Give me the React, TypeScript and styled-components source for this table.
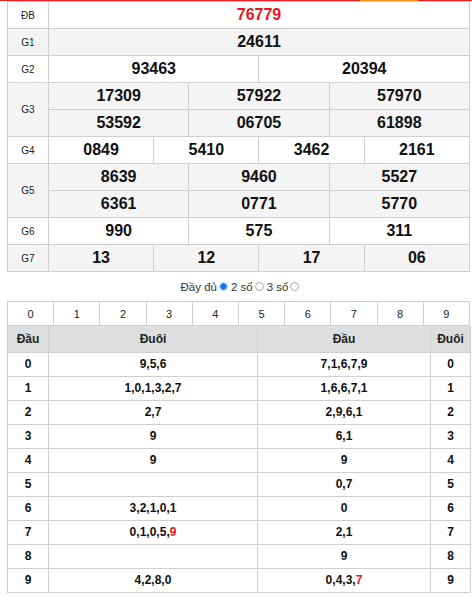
import React from 'react';
import styled, { createGlobalStyle } from 'styled-components';

const GlobalStyle = createGlobalStyle`
  html, body { margin: 0; padding: 0; background: #fff; }
  body { font-family: "Liberation Sans", Arial, sans-serif; color: #222; }
`;

const Page = styled.div`
  width: 472px;
`;

const TopBar = styled.div`
  height: 1px;
  display: flex;
`;

const BarSeg = styled.div<{ $w: number; $c: string }>`
  width: ${(p) => p.$w}px;
  background: ${(p) => p.$c};
  flex: ${(p) => (p.$w ? '0 0 auto' : '1 1 auto')};
`;

const Content = styled.div`
  padding-left: 7px;
  width: 463px;
`;

const ResultTable = styled.table`
  width: 463px;
  table-layout: fixed;
  border-collapse: collapse;
`;

const PrizeRow = styled.tr<{ $alt?: boolean }>`
  height: 27px;
  background: ${(p) => (p.$alt ? '#f4f4f4' : '#fff')};
`;

const PrizeLabel = styled.td`
  border: 1px solid #d0d0d0;
  padding: 0;
  text-align: center;
  font-size: 10px;
  color: #222;
`;

const PrizeNum = styled.td<{ $red?: boolean }>`
  border: 1px solid #d0d0d0;
  padding: 0;
  text-align: center;
  font-size: 16px;
  font-weight: bold;
  color: ${(p) => (p.$red ? '#e8161c' : '#111')};
`;

const ModeBar = styled.div`
  height: 29px;
  display: flex;
  align-items: center;
  justify-content: center;
  gap: 2px;
  font-size: 11.5px;
  color: #333;
  padding-left: 2px;
`;

const ModeText = styled.span`
  margin-left: 1px;
`;

const Radio = styled.span<{ $on?: boolean }>`
  width: 9px;
  height: 9px;
  box-sizing: border-box;
  border-radius: 50%;
  border: 1px solid ${(p) => (p.$on ? '#9cc3ee' : '#a9a9a9')};
  background: ${(p) => (p.$on ? 'radial-gradient(circle, #1a73e8 0 3px, #fff 3.3px)' : '#fff')};
  display: inline-block;
`;

const DigitTable = styled.table`
  width: 463px;
  table-layout: fixed;
  border-collapse: collapse;
`;

const DigitCell = styled.td`
  height: 23px;
  border: 1px solid #d0d0d0;
  padding: 0;
  text-align: center;
  font-size: 11px;
  color: #222;
  background: #fff;
`;

const LotoTable = styled.table`
  width: 463px;
  table-layout: fixed;
  border-collapse: collapse;
`;

const HeadRow = styled.tr`
  height: 26px;
  background: #dedede;
`;

const HeadCell = styled.th`
  border: 1px solid #d0d0d0;
  border-top: none;
  padding: 0;
  text-align: center;
  font-size: 12px;
  font-weight: bold;
  color: #222;
`;

const LotoRow = styled.tr`
  height: 24px;
  background: #fff;
`;

const LotoCell = styled.td`
  border: 1px solid #d0d0d0;
  padding: 0;
  text-align: center;
  font-size: 12px;
  font-weight: bold;
  color: #111;
`;

const Hot = styled.span`
  color: #e8161c;
`;

type Prize = { label: string; rows: string[][]; red?: boolean };

const prizes: Prize[] = [
  { label: 'ĐB', rows: [['76779']], red: true },
  { label: 'G1', rows: [['24611']] },
  { label: 'G2', rows: [['93463', '20394']] },
  { label: 'G3', rows: [['17309', '57922', '57970'], ['53592', '06705', '61898']] },
  { label: 'G4', rows: [['0849', '5410', '3462', '2161']] },
  { label: 'G5', rows: [['8639', '9460', '5527'], ['6361', '0771', '5770']] },
  { label: 'G6', rows: [['990', '575', '311']] },
  { label: 'G7', rows: [['13', '12', '17', '06']] },
];

type Loto = { d: string; tail: string[]; head: string[]; hotTail?: number; hotHead?: number };

const loto: Loto[] = [
  { d: '0', tail: ['9', '5', '6'], head: ['7', '1', '6', '7', '9'] },
  { d: '1', tail: ['1', '0', '1', '3', '2', '7'], head: ['1', '6', '6', '7', '1'] },
  { d: '2', tail: ['2', '7'], head: ['2', '9', '6', '1'] },
  { d: '3', tail: ['9'], head: ['6', '1'] },
  { d: '4', tail: ['9'], head: ['9'] },
  { d: '5', tail: [], head: ['0', '7'] },
  { d: '6', tail: ['3', '2', '1', '0', '1'], head: ['0'] },
  { d: '7', tail: ['0', '1', '0', '5', '9'], head: ['2', '1'], hotTail: 4 },
  { d: '8', tail: [], head: ['9'] },
  { d: '9', tail: ['4', '2', '8', '0'], head: ['0', '4', '3', '7'], hotHead: 3 },
];

const renderList = (items: string[], hot?: number) =>
  items.map((v, i) => (
    <React.Fragment key={i}>
      {i > 0 ? ',' : ''}
      {i === hot ? <Hot>{v}</Hot> : v}
    </React.Fragment>
  ));

export default function App() {
  return (
    <Page>
      <GlobalStyle />
      <TopBar>
        <BarSeg $w={360} $c="#ee1c25" />
        <BarSeg $w={58} $c="#f7941d" />
        <BarSeg $w={0} $c="#ee1c25" />
      </TopBar>
      <Content>
        <ResultTable>
          <colgroup>
            <col style={{ width: 41 }} />
            {Array.from({ length: 12 }).map((_, i) => (
              <col key={i} />
            ))}
          </colgroup>
          <tbody>
            {prizes.map((p, pi) =>
              p.rows.map((r, ri) => (
                <PrizeRow key={`${p.label}-${ri}`} $alt={pi % 2 === 1}>
                  {ri === 0 && <PrizeLabel rowSpan={p.rows.length}>{p.label}</PrizeLabel>}
                  {r.map((n, ni) => (
                    <PrizeNum key={ni} colSpan={12 / r.length} $red={p.red}>
                      {n}
                    </PrizeNum>
                  ))}
                </PrizeRow>
              ))
            )}
          </tbody>
        </ResultTable>

        <ModeBar>
          <ModeText>Đầy đủ</ModeText>
          <Radio $on />
          <ModeText>2 số</ModeText>
          <Radio />
          <ModeText>3 số</ModeText>
          <Radio />
        </ModeBar>

        <DigitTable>
          <tbody>
            <tr>
              {Array.from({ length: 10 }).map((_, i) => (
                <DigitCell key={i}>{i}</DigitCell>
              ))}
            </tr>
          </tbody>
        </DigitTable>

        <LotoTable>
          <colgroup>
            <col style={{ width: 41 }} />
            <col style={{ width: 209 }} />
            <col style={{ width: 173 }} />
            <col style={{ width: 40 }} />
          </colgroup>
          <thead>
            <HeadRow>
              <HeadCell>Đầu</HeadCell>
              <HeadCell>Đuôi</HeadCell>
              <HeadCell>Đầu</HeadCell>
              <HeadCell>Đuôi</HeadCell>
            </HeadRow>
          </thead>
          <tbody>
            {loto.map((l) => (
              <LotoRow key={l.d}>
                <LotoCell>{l.d}</LotoCell>
                <LotoCell>{renderList(l.tail, l.hotTail)}</LotoCell>
                <LotoCell>{renderList(l.head, l.hotHead)}</LotoCell>
                <LotoCell>{l.d}</LotoCell>
              </LotoRow>
            ))}
          </tbody>
        </LotoTable>
      </Content>
    </Page>
  );
}
